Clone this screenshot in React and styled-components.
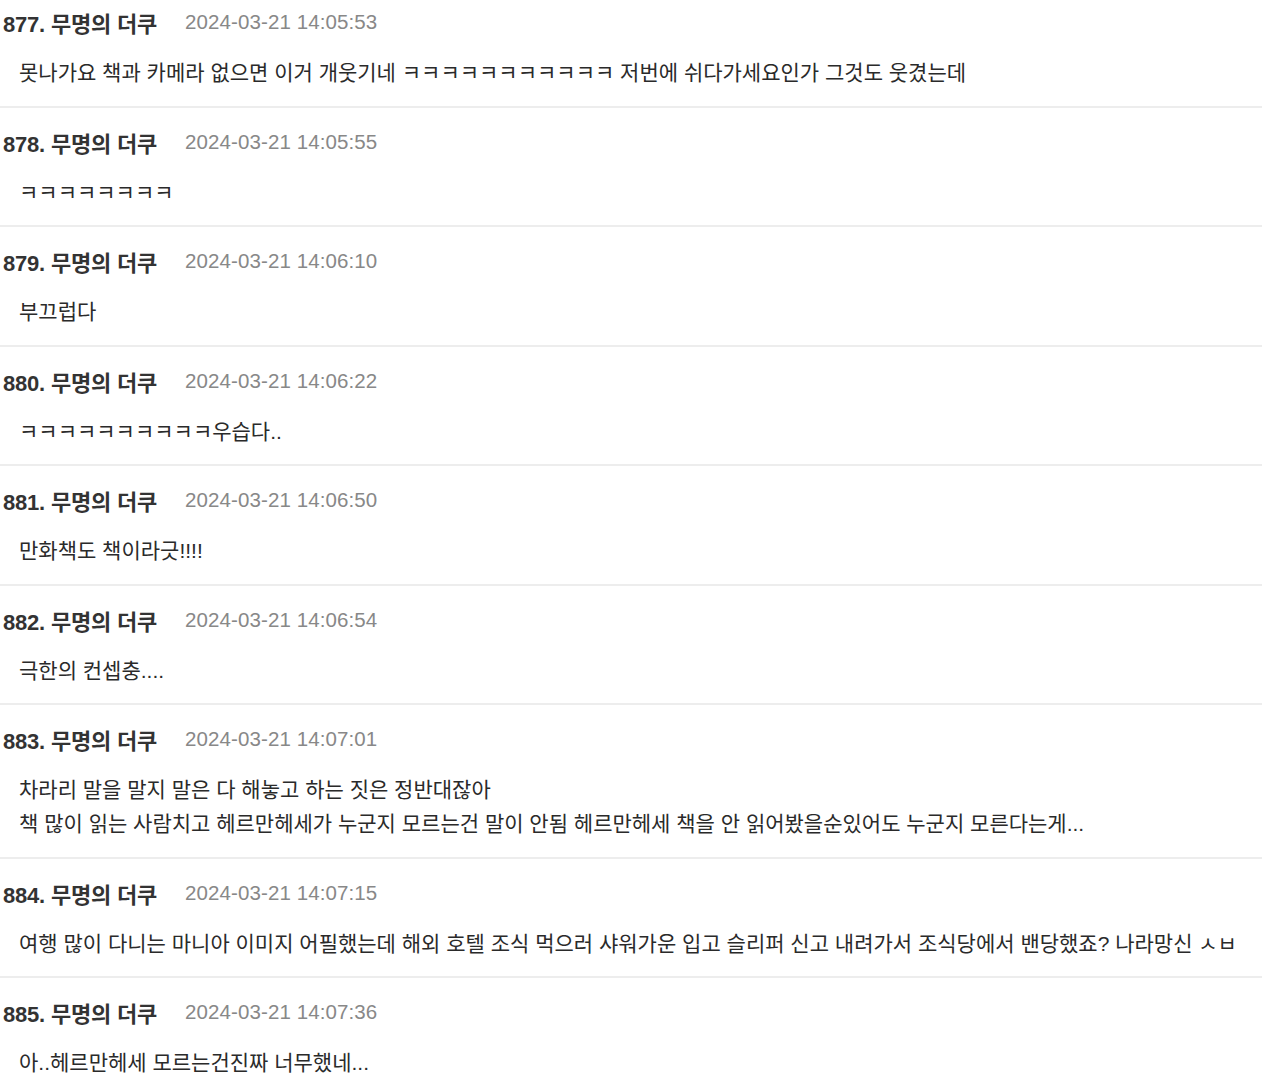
import React from 'react';
import styled, { createGlobalStyle } from 'styled-components';

const GlobalStyle = createGlobalStyle`
  html, body {
    margin: 0;
    padding: 0;
    background: #ffffff;
    overflow: hidden;
  }
`;

const posts = [
  { no: 877, date: '2024-03-21 14:05:53', lines: ['못나가요 책과 카메라 없으면 이거 개웃기네 ㅋㅋㅋㅋㅋㅋㅋㅋㅋㅋㅋ 저번에 쉬다가세요인가 그것도 웃겼는데'] },
  { no: 878, date: '2024-03-21 14:05:55', lines: ['ㅋㅋㅋㅋㅋㅋㅋㅋ'] },
  { no: 879, date: '2024-03-21 14:06:10', lines: ['부끄럽다'] },
  { no: 880, date: '2024-03-21 14:06:22', lines: ['ㅋㅋㅋㅋㅋㅋㅋㅋㅋㅋ우습다..'] },
  { no: 881, date: '2024-03-21 14:06:50', lines: ['만화책도 책이라긋!!!!'] },
  { no: 882, date: '2024-03-21 14:06:54', lines: ['극한의 컨셉충....'] },
  {
    no: 883,
    date: '2024-03-21 14:07:01',
    lines: [
      '차라리 말을 말지 말은 다 해놓고 하는 짓은 정반대잖아',
      '책 많이 읽는 사람치고 헤르만헤세가 누군지 모르는건 말이 안됨 헤르만헤세 책을 안 읽어봤을순있어도 누군지 모른다는게...',
    ],
  },
  { no: 884, date: '2024-03-21 14:07:15', lines: ['여행 많이 다니는 마니아 이미지 어필했는데 해외 호텔 조식 먹으러 샤워가운 입고 슬리퍼 신고 내려가서 조식당에서 밴당했죠? 나라망신 ㅅㅂ'] },
  { no: 885, date: '2024-03-21 14:07:36', lines: ['아..헤르만헤세 모르는건진짜 너무했네...'] },
];

const List = styled.div`
  margin-top: -12px;
  font-family: "Liberation Sans", "Noto Sans CJK KR", sans-serif;
`;

const Item = styled.div`
  padding: 20px 0 15.5px 3px;
  border-bottom: 2px solid #ededed;
`;

const Header = styled.div`
  display: flex;
  align-items: center;
  height: 28px;
  gap: 28px;
`;

const Name = styled.span`
  font-size: 22px;
  font-weight: 700;
  color: #333333;
  letter-spacing: -0.2px;
`;

const DateText = styled.span`
  font-size: 20.5px;
  color: #888888;
  letter-spacing: 0.1px;
`;

const Body = styled.div`
  margin-top: 20px;
  padding-left: 16px;
  font-size: 21px;
  line-height: 34px;
  color: #2a2a2a;
  white-space: nowrap;
`;

export default function App() {
  return (
    <>
      <GlobalStyle />
      <List>
        {posts.map((post) => (
          <Item key={post.no}>
            <Header>
              <Name>{post.no}. 무명의 더쿠</Name>
              <DateText>{post.date}</DateText>
            </Header>
            <Body>
              {post.lines.map((line, i) => (
                <div key={i}>{line}</div>
              ))}
            </Body>
          </Item>
        ))}
      </List>
    </>
  );
}
